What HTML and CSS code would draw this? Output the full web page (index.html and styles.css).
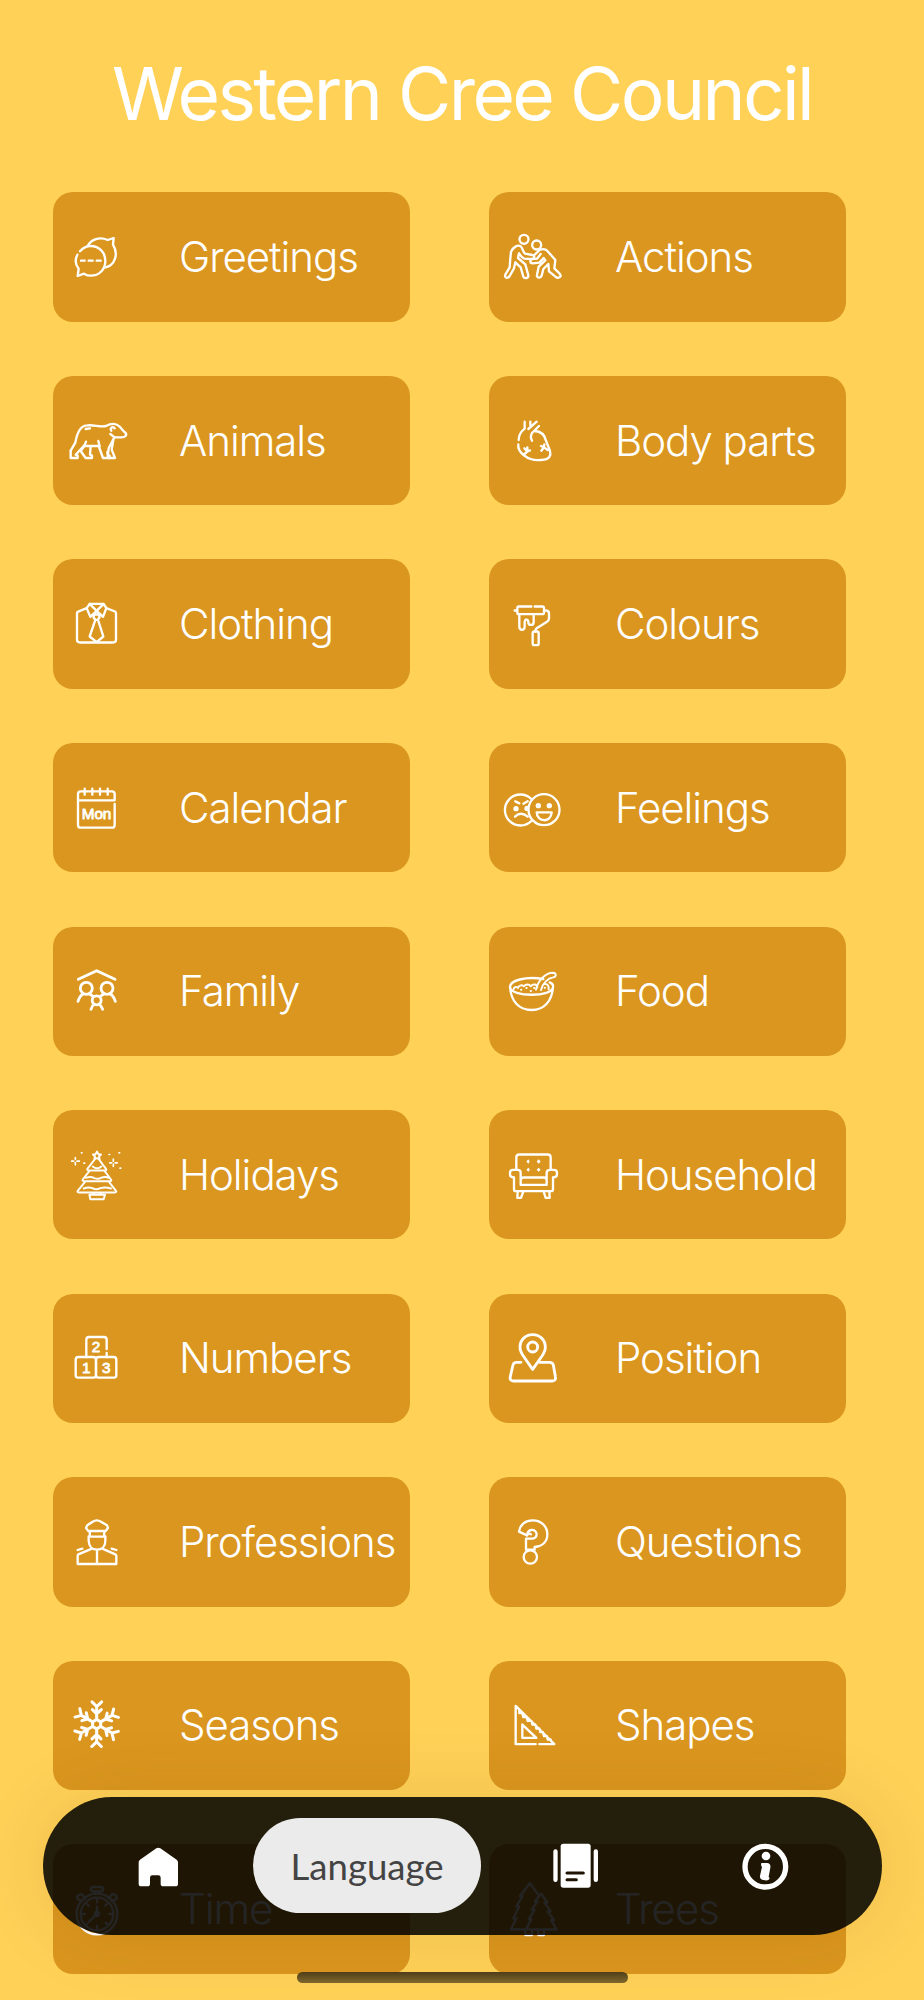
FILE: index.html
```html
<!DOCTYPE html>
<html lang="en">
<head>
<meta charset="utf-8">
<title>Western Cree Council</title>
<link rel="stylesheet" href="styles.css">
</head>
<body>
<div class="screen">
  <h1 class="title">Western Cree Council</h1>
  <main class="grid">
    <a class="card"><svg class="icon" viewBox="42 105 192 192"><path d="M90 184C101 171 112 168 122 168C148 168 166 188 166 213C166 238 148 257 122 257C113 257 107 254 102 251L83 258L86 236C76 224 75 208 82 194"/><path d="M114 166C124 149 148 139 173 150L191 144L189 164C206 191 196 228 163 233"/><path d="M93 212h11M116 212h12M140 212h12"/></svg><span class="label">Greetings</span></a>
    <a class="card"><svg class="icon" viewBox="45 105 192 192"><circle cx="117" cy="148" r="13.500"/><circle cx="155" cy="165" r="13.500"/><path d="M78 185C84 172 98 163 107 169C114 174 112 184 120 191L142 195C151 196 148 207 142 207L118 206C110 204 106 196 102 190L99 204L121 223L130 256C131 265 118 267 115 260L107 232L91 217L87 235L74 258C68 267 57 263 61 254L74 232L76 205Z"/><path d="M148 195L164 180C177 174 184 178 190 186L211 210L208 235L224 251C231 259 223 266 214 262L192 244L190 222L175 237L170 257C167 266 154 264 156 255L161 230L181 211L176 204L163 218L143 220C134 219 134 209 141 207L156 206L167 192"/></svg><span class="label">Actions</span></a>

    <a class="card"><svg class="icon" viewBox="42 656 192 192"><path d="M62 781V803H83V796L77 793L101 767H146L159 803H179V796L174 793L176 774L192 743"/><path d="M62 781L76 757C82 723 94 705 112 705C133 703 150 711 168 707C183 699 198 699 208 708L221 723C235 732 228 741 213 741H194L181 731"/><path d="M108 754L101 770L92 782L107 803H126V796L120 793L122 769M145 752L149 768M174 800L172 785M190 749L185 778L195 803H177M107 716L120 714M184 721C179 713 187 707 194 714"/></svg><span class="label">Animals</span></a>
    <a class="card"><svg class="icon" viewBox="45 656 192 192"><path d="M119 694V715C107 724 101 737 101 749M136 694V705M155 694L130 716M162 707L141 728C136 738 137 745 141 751M149 722C168 723 179 733 183 751L195 782C199 796 192 807 177 808C153 812 134 809 118 796C104 785 98 776 100 762M115 794L127 784L118 774M127 783L135 780M127 783V771M188 779L177 771L168 767M177 771L178 762M177 771L169 781"/></svg><span class="label">Body parts</span></a>

    <a class="card"><svg class="icon" viewBox="42 111.500 192 192"><path d="M110 160L83 171Q81 172 81 176V255Q81 263 90 263H189Q198 263 198 255V176Q198 172 195 170L169 160"/><path d="M119 147H161L169 160L159 186L149 176M119 147L110 160L121 186L131 176M119 147L149 177M161 147L131 177M132 179H148V189L143 195H137L131 189ZM136 195L119 245L140 262L160 245L144 195"/></svg><span class="label">Clothing</span></a>
    <a class="card"><svg class="icon" viewBox="45 111.500 192 192"><path d="M139 155H101Q97 155 97 160V173Q97 178 102 178H172Q177 178 177 173V160Q177 155 172 155H149M96 167H89M177 167H184Q192 168 192 176V191Q192 197 186 201L155 220Q151 223 151 230M103 178V216C103 228 119 228 119 216V202C119 191 130 192 130 202C130 213 146 213 146 202V178"/><rect x="143" y="230" width="18" height="41" rx="5"/></svg><span class="label">Colours</span></a>

    <a class="card"><svg class="icon" viewBox="42 662 192 192"><path d="M194 735H84M84 735V716Q84 708 92 708H186Q194 708 194 716V735M84 735V808Q84 817 92 817H186Q194 817 194 808V746M104 700V718M127 700V718M150 700V718M173 700V718"/><text class="icon-day" x="139.500" y="791">Mon</text></svg><span class="label">Calendar</span></a>
    <a class="card"><svg class="icon" viewBox="45 662 192 192"><path d="M139 731A46.500 46.500 0 1 0 139 797"/><circle cx="177" cy="763" r="46.500"/><circle class="solid" cx="93" cy="760" r="8"/><path class="solid" d="M131 752Q118 748 118 760Q118 768 129 767Z"/><circle class="solid" cx="160" cy="751" r="8"/><circle class="solid" cx="193" cy="751" r="8"/><path d="M91 738L103 744M128 738L115 745M90 784Q108 767 128 784M155 771H200C198 803 156 802 155 771Z"/></svg><span class="label">Feelings</span></a>

    <a class="card"><svg class="icon bold" viewBox="42 103 192 192"><path d="M85 164L140 138L195 164"/><circle cx="109" cy="191" r="18"/><circle cx="171" cy="191" r="18"/><circle cx="140" cy="227" r="13.500"/><path d="M84 230Q89 214 99 208M119 208L130 216M196 230Q191 214 181 208M161 208L150 216M123 254Q126 243 133 239M158 254Q154 243 147 239"/></svg><span class="label">Family</span></a>
    <a class="card"><svg class="icon" viewBox="45 103 192 192"><path d="M175 163C120 154 75 168 75 187C78 229 101 256 140 256C178 256 201 229 204 187C205 182 202 176 194 173M75 187C76 218 204 218 204 187"/><path class="fine" d="M86 193C88 185 96 186 99 190C101 181 113 180 116 185C123 178 132 177 137 185C144 177 155 178 157 188M153 195C158 171 179 144 204 144C215 145 215 156 204 158C189 160 173 176 168 196M179 178C188 177 192 184 191 194M108 195h1M124 190h1M137 199h1M147 190h1M179 189h1"/></svg><span class="label">Food</span></a>

    <a class="card"><svg class="icon" viewBox="42 653.500 192 192"><path class="fine" d="M141 679L145 687L153 688L147 694L149 703L141 699L133 703L135 694L129 688L137 687ZM134 703L112 731Q111 736 117 736H166Q171 735 168 731L147 703M118 738L98 763Q96 768 102 768H181Q186 767 183 763L164 738M105 770L83 797Q81 802 88 802H194Q201 801 198 797L177 770M128 724Q142 735 154 724M107 758Q123 753 131 758Q147 764 155 757Q167 753 176 758M101 790Q116 785 127 789Q139 796 151 789Q166 784 183 790M131 803V809M151 803V809M118 809H165L161 822H121Z"/><path class="hair" d="M76 697V703M76 712V719M65 708H71M81 708H88M190 702V708M190 717V724M179 713H185M195 713H202M94 683h2M177 688h2M207 683h2M210 729h2M102 714h2"/></svg><span class="label">Holidays</span></a>
    <a class="card"><svg class="icon" viewBox="45 653.500 192 192"><path d="M94 734V697Q94 688 103 688H188Q197 688 197 697V734M107 779V743Q107 734 98 734H84Q75 734 75 743V748Q75 756 87 757V792Q87 798 93 798H198Q204 798 204 792V757Q216 756 216 748V743Q216 734 207 734H195Q185 734 185 743V779ZM107 766Q107 757 116 757H176Q185 757 185 766M98 799L97 818H108L115 799M176 799L182 818H194L193 799"/><g class="solid"><path d="M130 702L134 709L130 716L124 709ZM161 702L167 709L161 716L155 709ZM130 728L135 734L130 740L124 734ZM161 728L167 734L161 740L155 734Z"/></g></svg><span class="label">Household</span></a>

    <a class="card"><svg class="icon" viewBox="42 109 192 192"><path d="M109 202V150Q109 142 117 142H162Q170 142 170 150V178M170 190V202"/><rect x="77" y="202" width="61" height="62" rx="8"/><rect x="138" y="202" width="61" height="62" rx="8"/><g class="icon-digit"><text x="138" y="188">2</text><text x="109" y="251">1</text><text x="169" y="251">3</text></g></svg><span class="label">Numbers</span></a>
    <a class="card"><svg class="icon bold" viewBox="45 109 192 192"><path d="M143 239L117 202C108 190 105 182 105 173C105 150 122 135 143 135C164 135 181 150 181 173C181 182 178 190 169 202Z"/><circle cx="143" cy="172" r="15"/><path d="M108 218H94Q86 218 84 226L76 260Q73 274 85 274H202Q214 274 211 260L205 226Q203 218 194 218H164"/></svg><span class="label">Position</span></a>

    <a class="card"><svg class="icon" viewBox="42 660 192 192"><path d="M115 723L108 714L112 706L128 695Q140 687 153 695L171 706L174 714L167 723ZM119 724L120 740H162L163 724M116 739V753C117 771 128 779 141 779C155 779 166 770 166 753V739M126 776L85 793Q83 794 83 798V822H199V798Q199 794 196 793L157 776M141 780V821M83 780L97 776M199 780L185 776"/></svg><span class="label">Professions</span></a>
    <a class="card"><svg class="icon" viewBox="45 660 192 192"><path d="M102 725C105 704 121 691 143 691C170 691 187 710 187 733C187 755 172 769 149 771V779H123V746H139C148 747 155 741 155 733C154 724 147 719 139 720C131 721 127 728 126 736Z"/><circle cx="136" cy="801" r="20"/><path d="M126 736Q131 728 138 733"/></svg><span class="label">Questions</span></a>

    <a class="card"><svg class="icon snow" viewBox="192 130.400 192 192"><path d="M290 210L302 217V231L290 238L278 231V217Z"/><g id="arm"><path d="M290 210V171M276 157L290 171L305 157M277 180L290 193L304 180"/></g><use href="#arm" transform="rotate(60 290 224)"/><use href="#arm" transform="rotate(120 290 224)"/><use href="#arm" transform="rotate(180 290 224)"/><use href="#arm" transform="rotate(240 290 224)"/><use href="#arm" transform="rotate(300 290 224)"/></svg><span class="label">Seasons</span></a>
    <a class="card"><svg class="icon" viewBox="114 130.400 192 192"><path d="M221 284H161V169L277 284H232M172 182V191H181L184 203H194L197 214H208L211 225H220L223 237H232L235 248H243L246 260H255L257 270H266M181 265V225L223 265Z"/></svg><span class="label">Shapes</span></a>

    <a class="card"><svg class="icon" viewBox="192 681 192 192"><circle cx="291" cy="792" r="61"/><circle cx="291" cy="792" r="49"/><rect x="273" y="711" width="36" height="13" rx="6"/><path d="M285 724V731M298 724V731M248 753L236 749Q228 745 233 738L241 733Q247 731 249 737L257 745M334 753L346 749Q354 745 349 738L341 733Q335 731 333 737L325 745M291 750V757M291 828V835M248 792H255M328 792H335M261 762L266 767M321 762L316 767M261 822L257 826M317 818L322 823"/><path d="M291 769V787M266 816L289 793M291 769V790"/><circle cx="291" cy="792" r="6"/></svg><span class="label">Time</span></a>
    <a class="card"><svg class="icon" viewBox="114 681 192 192"><path d="M192 838H147L163 805H154L172 769H163L182 738H174L204 700L227 732M192 838L208 808H200L218 779H209L227 754H219L237 731L256 757H247L266 784H257L276 810H268L283 838ZM190 840V855H210V840M229 840V855H246V840"/></svg><span class="label">Trees</span></a>
  </main>

  <nav class="tabbar">
    <a class="tab"><svg class="tab-icon" viewBox="406 580 141 141"><path d="M470 596Q476 592 482 596L531 630Q535 633 535 638V702Q535 710 527 710H491Q483 710 483 702V684Q483 677 476 677H458Q451 677 451 684V702Q451 710 443 710H425Q417 710 417 702V638Q417 633 421 630Z"/></svg></a>
    <a class="tab active">Language</a>
    <a class="tab"><svg class="tab-icon" viewBox="271 580 141 141"><rect x="275" y="599" width="13" height="98" rx="6.500"/><rect x="297" y="582" width="90" height="132" rx="8"/><rect x="396" y="599" width="13" height="98" rx="6.500"/><path class="ink" d="M316 670H365M316 690H344"/></svg></a>
    <a class="tab"><svg class="tab-icon" viewBox="841 580 141 141"><circle class="ring" cx="911" cy="651" r="61"/><circle cx="913" cy="619" r="13"/><path d="M899 640H916Q928 641 926 654L921 681L924 686Q923 694 910 692Q893 692 895 678L901 652L898 647Z"/></svg></a>
  </nav>
  <div class="home-indicator"></div>
</div>
</body>
</html>
```
FILE: styles.css
```css
* { box-sizing: border-box; }

body {
  margin: 0;
  background: #ffd157;
}

.screen {
  position: relative;
  width: 924px;
  height: 2000px;
  overflow: hidden;
  font-family: Inter, "Open Sans", sans-serif;
  color: #fff;
}

.title {
  margin: 0;
  padding-top: 49px;
  height: 192.4px;
  font-size: 73px;
  line-height: 90px;
  font-weight: 400;
  letter-spacing: -2.65px;
  text-align: center;
  white-space: nowrap;
}

.grid {
  display: grid;
  grid-template-columns: 357px 357px;
  grid-auto-rows: 129.3px;
  gap: 54.25px 79px;
  padding-left: 53.2px;
}

.card {
  display: flex;
  align-items: center;
  gap: 51px;
  padding-left: 10.8px;
  border-radius: 20px;
  background: #da961e;
}

.icon {
  flex: none;
  width: 64px;
  height: 64px;
  overflow: visible;
  fill: none;
  stroke: #fff;
  stroke-width: 7;
  stroke-linecap: round;
  stroke-linejoin: round;
}

.icon.bold { stroke-width: 8.5; }
.icon.snow { stroke-width: 9; }
.icon .fine { stroke-width: 5.8; }
.icon .hair { stroke-width: 5; }
.icon .solid { fill: #fff; stroke: none; }

.icon text {
  fill: #fff;
  stroke: #fff;
  stroke-width: 2.5;
  font-family: "Liberation Sans", Arial, sans-serif;
  text-anchor: middle;
}

.icon .icon-day {
  font-size: 46px;
  letter-spacing: -0.5px;
}

.icon-digit { font-size: 46px; }

.label {
  font-size: 42px;
  line-height: 52px;
  font-weight: 300;
  letter-spacing: -1.05px;
  white-space: nowrap;
}

.tabbar {
  position: absolute;
  left: 42.5px;
  top: 1796.7px;
  width: 839px;
  height: 138px;
  display: flex;
  align-items: center;
  padding: 0 21px;
  border-radius: 69px;
  background: rgba(0, 0, 0, 0.86);
  box-shadow: 0 0 75px rgba(80, 50, 0, 0.1);
}

.tab {
  flex: 1;
  display: flex;
  align-items: center;
  justify-content: center;
}

.tab.active {
  flex: none;
  width: 227.5px;
  height: 95.5px;
  border-radius: 48px;
  background: #ebebeb;
  color: #444;
  font-family: Lato, sans-serif;
  font-size: 36.6px;
}

.tab-icon {
  width: 47px;
  height: 47px;
  margin-top: 2px;
  fill: #fff;
}

.tab-icon .ink {
  stroke: #1f1404;
  stroke-width: 9;
  stroke-linecap: round;
}

.tab-icon .ring {
  fill: none;
  stroke: #fff;
  stroke-width: 16;
}

.home-indicator {
  position: absolute;
  left: 297px;
  top: 1972px;
  width: 331px;
  height: 10.5px;
  border-radius: 6px;
  background: linear-gradient(#4f3d18, #7f682d);
}
```
